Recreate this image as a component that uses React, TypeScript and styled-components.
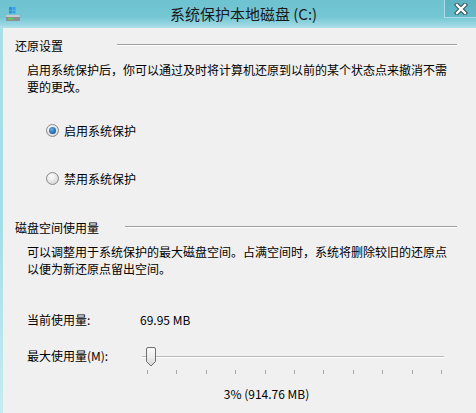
import styled, { createGlobalStyle } from "styled-components";

const GlobalStyle = createGlobalStyle`
  html, body {
    margin: 0;
    padding: 0;
    background: #f0f0f0;
  }
  body {
    font-family: "Noto Sans CJK SC", "Liberation Sans", sans-serif;
    font-size: 12px;
    color: #000000;
  }
`;

const Window = styled.div`
  width: 476px;
  height: 413px;
  display: flex;
  flex-direction: column;
  overflow: hidden;
`;

const TitleBar = styled.div`
  height: 28px;
  flex-shrink: 0;
  display: flex;
  align-items: center;
  position: relative;
  background: linear-gradient(
    to bottom,
    #6ec3d1 0%,
    #74c6d3 60%,
    #9ad8e2 90%,
    #b3e2ea 100%
  );
`;

const AppIcon = styled.div`
  width: 16px;
  height: 16px;
  margin-left: 5px;
  display: flex;
`;

const Title = styled.div`
  flex: 1;
  text-align: center;
  font-size: 15px;
  color: #1a1a1a;
  padding-right: 10px;
  margin-top: -2px;
`;

const CloseButton = styled.div`
  position: absolute;
  top: 0;
  right: 0;
  width: 32px;
  height: 18px;
  box-sizing: border-box;
  border-left: 1px solid #a8dde6;
  border-bottom: 1px solid #a8dde6;
  background: linear-gradient(to bottom, #5db3c2, #63b9c7);
  display: flex;
  align-items: center;
  justify-content: center;
`;

const Body = styled.div`
  flex: 1;
  display: flex;
`;

const LeftFrame = styled.div`
  width: 3px;
  flex-shrink: 0;
  background: linear-gradient(to bottom, #a9dfe7, #a3dde6 50%, #c5ecf1);
`;

const Content = styled.div`
  flex: 1;
  background: #f0f0f0;
  padding: 7px 19px 0 12px;
  display: flex;
  flex-direction: column;
`;

const SectionHeader = styled.div<{ $top?: number }>`
  height: 20px;
  display: flex;
  align-items: center;
  gap: 12px;
  margin-top: ${(p) => p.$top ?? 0}px;
`;

const HeaderLabel = styled.span<{ $width: number }>`
  width: ${(p) => p.$width}px;
  white-space: nowrap;
`;

const HeaderLine = styled.div`
  flex: 1;
  height: 1px;
  background: #a0a0a0;
  border-bottom: 1px solid #ffffff;
`;

const Paragraph = styled.p<{ $top: number }>`
  margin: ${(p) => p.$top}px 0 0 12px;
  line-height: 17px;
  padding-right: 2px;
`;

const RadioRow = styled.label<{ $top: number }>`
  display: flex;
  align-items: center;
  gap: 5px;
  height: 16px;
  margin: ${(p) => p.$top}px 0 0 31px;
`;

const RadioCircle = styled.span<{ $checked?: boolean }>`
  width: 11px;
  height: 11px;
  border-radius: 50%;
  border: 1px solid #8a8a8a;
  background: radial-gradient(circle at 40% 35%, #ffffff, #e0e0e0 60%, #c8c8c8);
  display: flex;
  align-items: center;
  justify-content: center;
  flex-shrink: 0;
  &::after {
    content: "";
    display: ${(p) => (p.$checked ? "block" : "none")};
    width: 7px;
    height: 7px;
    border-radius: 50%;
    background: radial-gradient(circle at 40% 35%, #5fb0e8, #1a62a8 70%, #0e3f78);
  }
`;

const InfoRow = styled.div<{ $top: number }>`
  display: flex;
  align-items: center;
  height: 16px;
  margin: ${(p) => p.$top}px 0 0 12px;
`;

const InfoLabel = styled.span`
  width: 113px;
  flex-shrink: 0;
`;

const SliderRow = styled.div`
  display: flex;
  align-items: flex-start;
  margin: 19px 0 0 12px;
`;

const SliderLabel = styled.span`
  width: 113px;
  flex-shrink: 0;
  line-height: 20px;
`;

const Slider = styled.div`
  position: relative;
  width: 304px;
  height: 32px;
`;

const Track = styled.div`
  position: absolute;
  top: 10px;
  left: 2px;
  right: 0;
  height: 1px;
  background: #b8b8b8;
  border-bottom: 1px solid #ffffff;
`;

const Thumb = styled.div`
  position: absolute;
  top: 1px;
  width: 12px;
  height: 20px;
  margin-left: -6px;
`;

const Ticks = styled.div`
  position: absolute;
  top: 24px;
  left: 7px;
  right: 2px;
  display: flex;
  justify-content: space-between;
`;

const Tick = styled.span`
  width: 1px;
  height: 4px;
  background: #a8a8a8;
`;

const Percent = styled.div`
  margin-top: 7px;
  text-align: center;
  padding-left: 61px;
`;

function DriveIcon() {
  return (
    <svg width="16" height="16" viewBox="0 0 16 16">
      <rect x="4" y="1" width="3" height="3" fill="#2f8fe0" />
      <rect x="7.5" y="1" width="3" height="3" fill="#37a0ee" />
      <rect x="4" y="4.5" width="3" height="3" fill="#2f8fe0" />
      <rect x="7.5" y="4.5" width="3" height="3" fill="#37a0ee" />
      <rect x="1" y="9" width="14" height="6" rx="1" fill="#8a8f94" />
      <rect x="1" y="9" width="14" height="2" rx="1" fill="#c7cbcf" />
      <rect x="3" y="12" width="5" height="1.5" fill="#5fd35a" />
    </svg>
  );
}

function CloseGlyph() {
  return (
    <svg width="14" height="12" viewBox="0 0 14 12">
      <path d="M3 2 L11 10 M11 2 L3 10" stroke="#2c4f57" strokeWidth="4.4" strokeLinecap="square" />
      <path d="M3 2 L11 10 M11 2 L3 10" stroke="#ffffff" strokeWidth="2.4" strokeLinecap="square" />
    </svg>
  );
}

function ThumbGlyph() {
  return (
    <svg width="12" height="20" viewBox="0 0 12 20">
      <defs>
        <linearGradient id="thumbFill" x1="0" y1="0" x2="0" y2="1">
          <stop offset="0" stopColor="#fbfbfb" />
          <stop offset="0.55" stopColor="#ececec" />
          <stop offset="1" stopColor="#d2d2d2" />
        </linearGradient>
      </defs>
      <path
        d="M1.5 2 Q1.5 0.5 3 0.5 H9 Q10.5 0.5 10.5 2 V14.5 L6 19 L1.5 14.5 Z"
        fill="url(#thumbFill)"
        stroke="#707070"
        strokeWidth="1"
        strokeLinejoin="round"
      />
    </svg>
  );
}

const usagePercent = 3;

export default function App() {
  return (
    <>
      <GlobalStyle />
      <Window>
        <TitleBar>
          <AppIcon>
            <DriveIcon />
          </AppIcon>
          <Title>系统保护本地磁盘 (C:)</Title>
          <CloseButton>
            <CloseGlyph />
          </CloseButton>
        </TitleBar>
        <Body>
          <LeftFrame />
          <Content>
            <SectionHeader>
              <HeaderLabel $width={90}>还原设置</HeaderLabel>
              <HeaderLine />
            </SectionHeader>
            <Paragraph $top={6}>
              启用系统保护后，你可以通过及时将计算机还原到以前的某个状态点来撤消不需要的更改。
            </Paragraph>
            <RadioRow $top={27}>
              <RadioCircle $checked />
              启用系统保护
            </RadioRow>
            <RadioRow $top={32}>
              <RadioCircle />
              禁用系统保护
            </RadioRow>
            <SectionHeader $top={31}>
              <HeaderLabel $width={98}>磁盘空间使用量</HeaderLabel>
              <HeaderLine />
            </SectionHeader>
            <Paragraph $top={6}>
              可以调整用于系统保护的最大磁盘空间。占满空间时，系统将删除较旧的还原点以便为新还原点留出空间。
            </Paragraph>
            <InfoRow $top={34}>
              <InfoLabel>当前使用量:</InfoLabel>
              <span>69.95 MB</span>
            </InfoRow>
            <SliderRow>
              <SliderLabel>最大使用量(M):</SliderLabel>
              <Slider>
                <Track />
                <Thumb style={{ left: `${8 + usagePercent}px` }}>
                  <ThumbGlyph />
                </Thumb>
                <Ticks>
                  {Array.from({ length: 11 }).map((_, i) => (
                    <Tick key={i} />
                  ))}
                </Ticks>
              </Slider>
            </SliderRow>
            <Percent>3% (914.76 MB)</Percent>
          </Content>
        </Body>
      </Window>
    </>
  );
}
